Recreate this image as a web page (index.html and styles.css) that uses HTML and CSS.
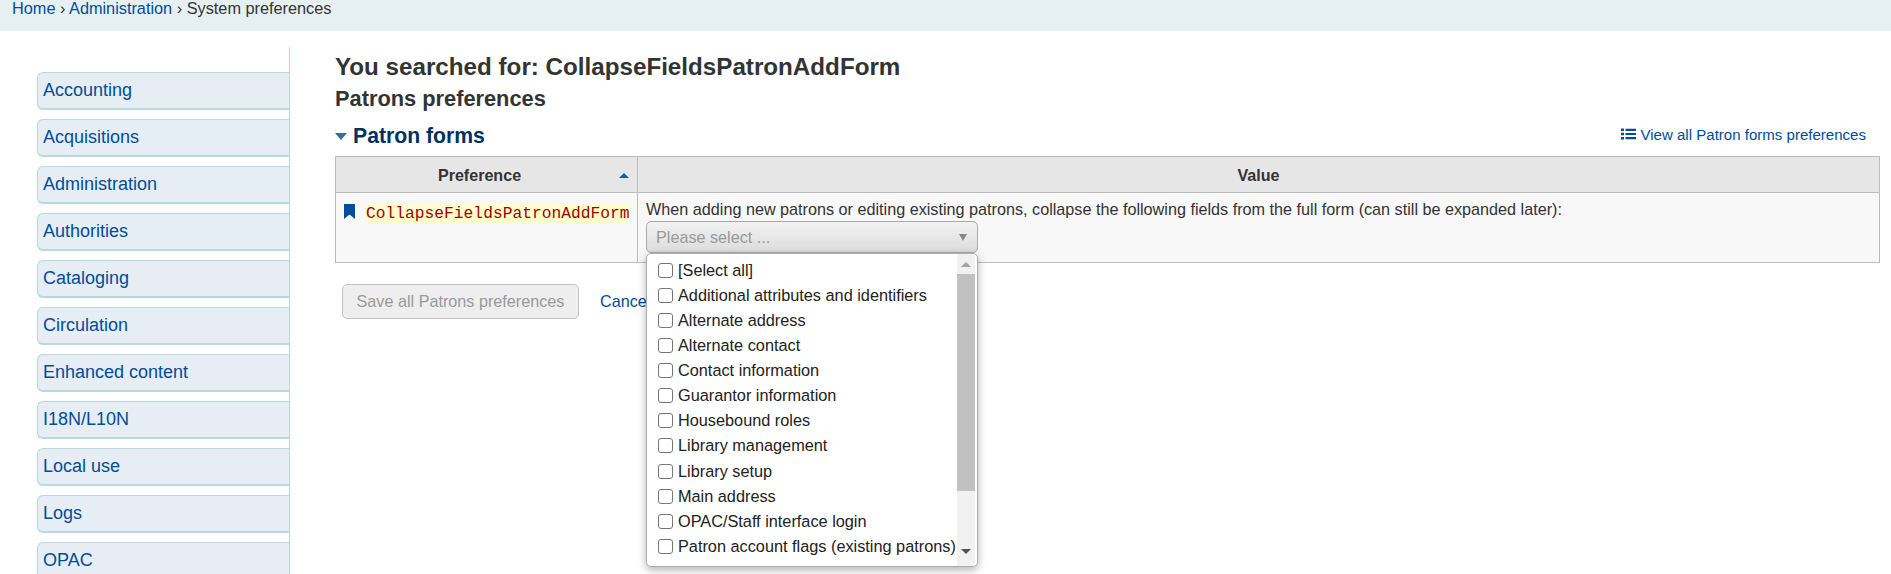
FILE: index.html
```html
<!DOCTYPE html>
<html lang="en">
<head>
<meta charset="utf-8">
<title>System preferences</title>
<link rel="stylesheet" href="styles.css">
</head>
<body>
<nav class="crumbs"><a href="#">Home</a> › <a href="#">Administration</a> › System preferences</nav>
<div class="page">
  <aside class="side">
    <ul class="tabs">
      <li><a href="#">Accounting</a></li>
      <li><a href="#">Acquisitions</a></li>
      <li><a href="#">Administration</a></li>
      <li><a href="#">Authorities</a></li>
      <li><a href="#">Cataloging</a></li>
      <li><a href="#">Circulation</a></li>
      <li><a href="#">Enhanced content</a></li>
      <li><a href="#">I18N/L10N</a></li>
      <li><a href="#">Local use</a></li>
      <li><a href="#">Logs</a></li>
      <li><a href="#">OPAC</a></li>
    </ul>
  </aside>
  <main class="main">
    <h1>You searched for: CollapseFieldsPatronAddForm</h1>
    <h2>Patrons preferences</h2>
    <div class="section">
      <h3><span class="caret"></span>Patron forms</h3>
      <a class="viewall" href="#"><svg class="listicon" viewBox="0 0 15 12" width="15" height="12"><path d="M0 .5h3v2.6H0zM0 4.7h3v2.6H0zM0 8.9h3v2.6H0zM4.5 .7H15v2.2H4.500zM4.5 4.900H15v2.2H4.500zM4.5 9.100H15v2.200H4.500z"/></svg>View all Patron forms preferences</a>
    </div>
    <table class="prefs">
      <thead>
        <tr><th class="c1"><span class="th-label">Preference</span><span class="sort"></span></th><th>Value</th></tr>
      </thead>
      <tbody>
        <tr>
          <td class="c1"><div class="prefname"><svg class="mark" viewBox="0 0 11 15" width="11" height="15"><path d="M0 0h11v15L5.500 10.500 0 15z"/></svg><code>CollapseFieldsPatronAddForm</code></div></td>
          <td class="val">
            <div class="desc">When adding new patrons or editing existing patrons, collapse the following fields from the full form (can still be expanded later):</div>
            <div class="msel">
              <button class="msel-btn" type="button"><span>Please select ...</span><span class="msel-arrow"></span></button>
              <div class="drop">
                <ul class="opts">
                  <li><label><input type="checkbox"><span>[Select all]</span></label></li>
                  <li><label><input type="checkbox"><span>Additional attributes and identifiers</span></label></li>
                  <li><label><input type="checkbox"><span>Alternate address</span></label></li>
                  <li><label><input type="checkbox"><span>Alternate contact</span></label></li>
                  <li><label><input type="checkbox"><span>Contact information</span></label></li>
                  <li><label><input type="checkbox"><span>Guarantor information</span></label></li>
                  <li><label><input type="checkbox"><span>Housebound roles</span></label></li>
                  <li><label><input type="checkbox"><span>Library management</span></label></li>
                  <li><label><input type="checkbox"><span>Library setup</span></label></li>
                  <li><label><input type="checkbox"><span>Main address</span></label></li>
                  <li><label><input type="checkbox"><span>OPAC/Staff interface login</span></label></li>
                  <li><label><input type="checkbox"><span>Patron account flags (existing patrons)</span></label></li>
                  <li><label><input type="checkbox"><span>Patron attributes</span></label></li>
                </ul>
                <div class="sbar"><span class="sbar-up"></span><span class="sbar-thumb"></span><span class="sbar-down"></span></div>
              </div>
            </div>
          </td>
        </tr>
      </tbody>
    </table>
    <div class="actions">
      <button class="save" type="button">Save all Patrons preferences</button>
      <a class="cancel" href="#">Cancel</a>
    </div>
  </main>
</div>
</body>
</html>
```
FILE: styles.css
```css
* { box-sizing: border-box; }
html, body { margin: 0; height: 100%; overflow: hidden; }
body { font-family: "Liberation Sans", Arial, sans-serif; font-size: 16px; color: #333; background: #fff; }
a { color: #004d99; text-decoration: none; }

.crumbs { height: 31px; background: #e6f0f2; padding: 0 12px; font-size: 16.300px; line-height: 17px; margin: 0; }

.page { display: flex; padding-top: 16px; }
.side { width: 290px; flex: none; height: 540px; padding: 25px 0 0 37px; border-right: 1px solid #b9d8d9; }
.tabs { list-style: none; margin: 0; padding: 0; }
.tabs li { height: 38px; margin-bottom: 9px; }
.tabs a { display: block; height: 38px; line-height: 35px; padding-left: 5px; font-size: 18px; background: #e6edf4; border: 1px solid #b9d8d9; border-bottom-width: 2px; border-right: 0; border-radius: 6px 0 0 6px; }

.main { flex: 1; padding: 7px 11px 0 45px; min-width: 0; }
h1 { font-size: 24.200px; line-height: 26px; margin: 0; font-weight: bold; color: #333; }
h2 { font-size: 21.800px; line-height: 24px; margin: 7px 0 0; font-weight: bold; color: #333; }
.section { display: flex; justify-content: space-between; align-items: center; margin-top: 13px; height: 24px; }
h3 { margin: 0; font-size: 21.200px; line-height: 24px; font-weight: bold; color: #00305f; display: flex; align-items: center; }
.caret { width: 0; height: 0; border-left: 6px solid transparent; border-right: 6px solid transparent; border-top: 7px solid #3c6a9b; margin-right: 6px; }
.viewall { font-size: 15.050px; display: flex; align-items: center; margin: -4px 14px 0 0; }
.listicon { fill: #004d99; margin-right: 4px; }

.prefs { width: 100%; table-layout: fixed; border-collapse: collapse; margin-top: 8px; font-size: 16.200px; }
.prefs th, .prefs td { border: 1px solid #bcbcbc; }
.prefs th { height: 36px; background: #e6e6e6; font-size: 16.100px; color: #333; padding: 2px 0 0; position: relative; }
.th-label { display: inline-block; padding-right: 14px; }
.prefs .c1 { width: 302px; }
.prefs td { height: 70px; background: #f8f8f8; vertical-align: top; padding: 0; }
.sort { position: absolute; right: 8px; top: 16px; border-left: 5px solid transparent; border-right: 5px solid transparent; border-bottom: 5px solid #0a5fb4; }
.prefname { display: flex; align-items: flex-start; padding: 11px 0 0 8px; }
.mark { fill: #004d99; flex: none; margin: 0 11px 0 0; }
code { font-family: "Liberation Mono", "Courier New", monospace; font-size: 16.270px; line-height: 19px; color: #a00000; background: #ffffcc; }
.val { padding: 8px 8px 0 8px !important; }
.desc { line-height: 17px; }

.msel { position: relative; width: 332px; margin-top: 3px; }
.msel-btn { width: 100%; height: 32px; display: flex; align-items: center; justify-content: space-between; padding: 0 9px; font: 16.200px "Liberation Sans", Arial, sans-serif; color: #999; background: linear-gradient(#f2f2f2, #dcdcdc); border: 1px solid #aaa; border-radius: 5px; }
.msel-arrow { border-left: 4px solid transparent; border-right: 4px solid transparent; border-top: 7px solid #888; margin-right: 1px; }
.drop { position: absolute; left: 0; top: 32px; width: 332px; height: 314px; background: #fff; border: 1px solid #aeaeae; border-radius: 5px; overflow: hidden; box-shadow: 0 3px 8px rgba(0,0,0,.3); z-index: 5; }
.opts { list-style: none; margin: 0; padding: 3.500px 0 0 11px; font-size: 16.300px; color: #222; }
.opts li { height: 25.150px; white-space: nowrap; }
.opts li:last-child { padding-top: 2px; }
.opts label { display: flex; align-items: center; height: 25px; }
.opts input { appearance: none; -webkit-appearance: none; width: 15px; height: 15px; margin: 0 5px 0 0; background: #fff; border: 1px solid #767676; border-radius: 3px; flex: none; }
.sbar { position: absolute; right: 2px; top: 0; bottom: 0; width: 18px; background: #f1f1f1; display: flex; flex-direction: column; align-items: center; }
.sbar-up { margin-top: 8px; border-left: 5px solid transparent; border-right: 5px solid transparent; border-bottom: 5px solid #a3a3a3; }
.sbar-thumb { width: 18px; height: 217px; background: #c1c1c1; margin-top: 7px; }
.sbar-down { margin-top: 58px; border-left: 5px solid transparent; border-right: 5px solid transparent; border-top: 5px solid #505050; }

.actions { display: flex; align-items: center; margin: 21px 0 0 7px; }
.save { width: 237px; height: 35px; padding: 0; font: 16.200px "Liberation Sans", Arial, sans-serif; color: #999; background: #eee; border: 1px solid #c2c2c2; border-radius: 5px; }
.cancel { margin: -1px 0 0 21px; font-size: 16.200px; }
```
